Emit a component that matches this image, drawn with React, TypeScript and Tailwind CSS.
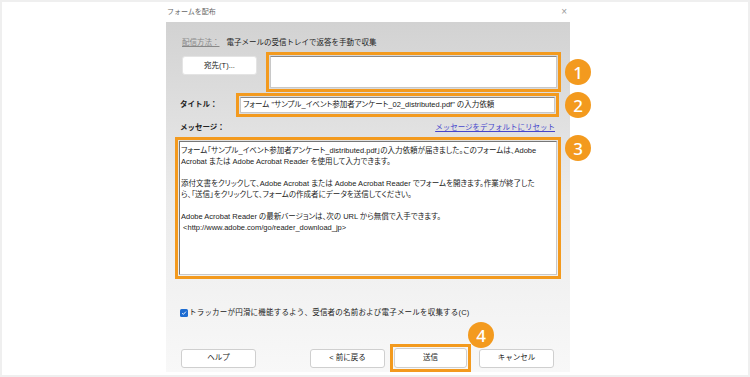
import React from "react";

const font = { fontFamily: '"Liberation Sans", "Noto Sans CJK JP", sans-serif' };

function Badge({ n, className }: { n: number; className: string }) {
  return (
    <div
      className={`absolute flex h-[26px] w-[26px] items-center justify-center rounded-full bg-[#f39a1e] text-[17px] font-medium leading-none text-white ${className}`}
      style={{ fontFamily: '"Noto Sans", sans-serif' }}
    >
      {n}
    </div>
  );
}

function Btn({ label, className = "" }: { label: string; className?: string }) {
  return (
    <div
      className={`flex h-[19px] w-[75px] items-center justify-center rounded-[3px] border border-[#cfcfcf] bg-white text-[7.5px] text-[#222] ${className}`}
    >
      {label}
    </div>
  );
}

export default function App() {
  return (
    <div className="h-[377px] w-[750px] overflow-hidden border-2 border-[#efefef] bg-white" style={font}>
      <div className="relative ml-[164px] h-[370px] w-[404px]">
        {/* title bar */}
        <div className="flex h-[20px] items-center justify-between pl-[1px] pr-[3px] text-[7px] text-[#666]">
          <span>フォームを配布</span>
          <span className="text-[10px] leading-none text-[#999]">×</span>
        </div>

        {/* body */}
        <div className="relative h-[350px] bg-gradient-to-b from-[#d2d2d2] via-[#ebebeb] to-[#f8f8f8] pt-[14px]">
          <div className="flex h-[14px] items-center pl-[16px] text-[7.5px]">
            <span className="text-[#888] underline">配信方法：</span>
            <span className="ml-[7px] text-[#222]">電子メールの受信トレイで返答を手動で収集</span>
          </div>

          <div className="mt-[2px] flex h-[40px] items-start">
            <Btn label="宛先(T)..." className="ml-[16px] mt-[4px] h-[16px] w-[73px] rounded-[2px] border-[#e4e4e4]" />
            <div className="ml-[9px] h-[40px] w-[295px] border-[3px] border-[#f39a1e] p-px">
              <div className="h-full w-full border border-[#c8c8c8] border-t-[#8a8a8a] bg-white" />
            </div>
          </div>

          <div className="mt-px flex h-[24px] items-center">
            <span className="ml-[14px] w-[56px] text-[7.5px] font-bold text-[#222]">タイトル：</span>
            <div className="h-[24px] w-[323px] border-[3px] border-[#f39a1e] p-px">
              <div className="flex h-full w-full items-center whitespace-nowrap border border-[#c8c8c8] border-t-[#8a8a8a] bg-white pl-[2px] text-[7.5px] text-[#222] [font-feature-settings:'palt']">
                フォーム "サンプル_イベント参加者アンケート_02_distributed.pdf" の入力依頼
              </div>
            </div>
          </div>

          <div className="mt-[4px] flex h-[14px] w-[389px] items-center justify-between">
            <span className="ml-[14px] text-[7.5px] font-bold text-[#222]">メッセージ：</span>
            <span className="text-[7.5px] text-[#4646cc] underline">メッセージをデフォルトにリセット</span>
          </div>

          <div className="ml-[9px] mt-[2px] h-[142px] w-[386px] border-[3px] border-[#f39a1e] p-px">
            <div className="h-full w-full whitespace-nowrap border border-[#c8c8c8] border-l-[#777] border-t-[#777] bg-white px-[1px] pt-[3px] text-[7.5px] leading-[11px] text-[#222] [font-feature-settings:'palt']">
              <p>フォーム「サンプル_イベント参加者アンケート_distributed.pdf」の入力依頼が届きました。このフォームは、Adobe</p>
              <p>Acrobat または Adobe Acrobat Reader を使用して入力できます。</p>
              <p className="mt-[11px]">添付文書をクリックして、Adobe Acrobat または Adobe Acrobat Reader でフォームを開きます。作業が終了した</p>
              <p>ら、「送信」をクリックして、フォームの作成者にデータを送信してください。</p>
              <p className="mt-[11px]">Adobe Acrobat Reader の最新バージョンは、次の URL から無償で入手できます。</p>
              <p>&nbsp;&lt;http://www.adobe.com/go/reader_download_jp&gt;</p>
            </div>
          </div>

          <div className="ml-[14px] mt-[28px] flex h-[12px] items-center text-[7.5px] text-[#222]">
            <span className="flex h-[8px] w-[8px] items-center justify-center rounded-[1.5px] bg-[#1d6cd1]">
              <svg viewBox="0 0 8 8" className="h-[6px] w-[6px]">
                <path d="M1.5 4.2 L3.2 5.8 L6.5 2.2" fill="none" stroke="white" strokeWidth="1.2" />
              </svg>
            </span>
            <span className="ml-[1px] tracking-[0.2px]">トラッカーが円滑に機能するよう、受信者の名前および電子メールを収集する(C)</span>
          </div>

          <div className="mt-[25px] flex h-[28px] items-center">
            <Btn label="ヘルプ" className="ml-[15px]" />
            <Btn label="< 前に戻る" className="ml-[54px]" />
            <div className="ml-[5px] h-[28px] w-[81px] border-[3px] border-[#f39a1e] p-px">
              <Btn label="送信" className="h-full w-full rounded-[2px]" />
            </div>
            <Btn label="キャンセル" className="ml-[8px]" />
          </div>
        </div>

        <Badge n={1} className="left-[399px] top-[57px]" />
        <Badge n={2} className="left-[399px] top-[90px]" />
        <Badge n={3} className="left-[399px] top-[133px]" />
        <Badge n={4} className="left-[302px] top-[320px]" />
      </div>
    </div>
  );
}
